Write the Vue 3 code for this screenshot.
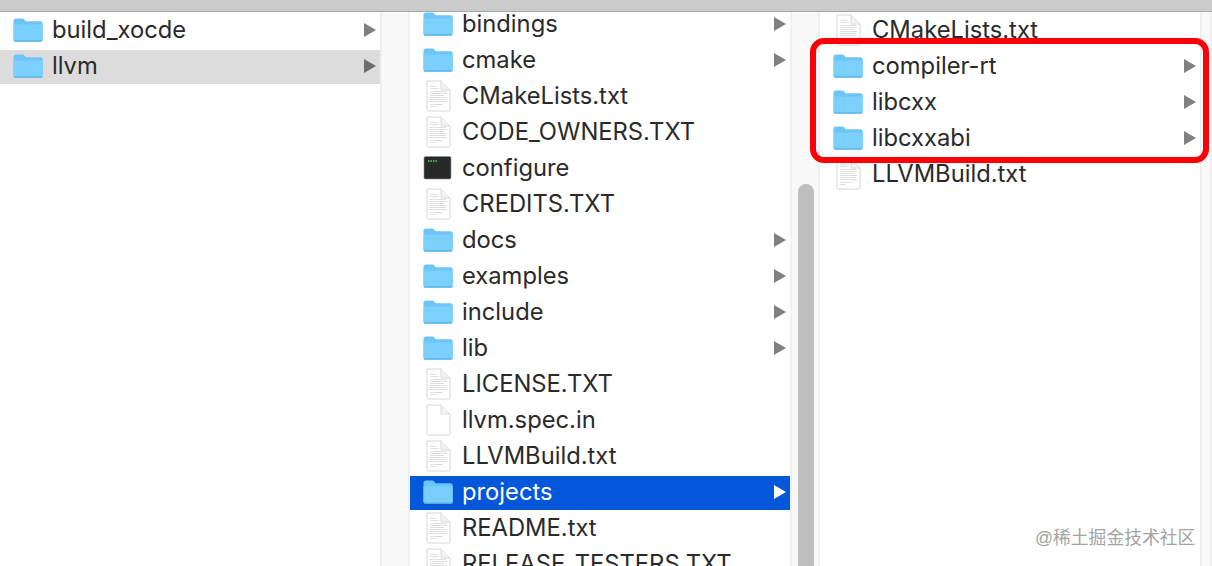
<script setup>
const columns = [
  {
    key: 'a',
    scroll: false,
    rows: [
      { name: 'build_xocde', type: 'folder' },
      { name: 'llvm', type: 'folder', state: 'inactive' },
    ],
  },
  {
    key: 'b',
    scroll: true,
    rows: [
      { name: 'bindings', type: 'folder' },
      { name: 'cmake', type: 'folder' },
      { name: 'CMakeLists.txt', type: 'doc' },
      { name: 'CODE_OWNERS.TXT', type: 'doc' },
      { name: 'configure', type: 'exec' },
      { name: 'CREDITS.TXT', type: 'doc' },
      { name: 'docs', type: 'folder' },
      { name: 'examples', type: 'folder' },
      { name: 'include', type: 'folder' },
      { name: 'lib', type: 'folder' },
      { name: 'LICENSE.TXT', type: 'doc' },
      { name: 'llvm.spec.in', type: 'blank' },
      { name: 'LLVMBuild.txt', type: 'doc' },
      { name: 'projects', type: 'folder', state: 'active' },
      { name: 'README.txt', type: 'doc' },
      { name: 'RELEASE_TESTERS.TXT', type: 'doc' },
    ],
  },
  {
    key: 'c',
    scroll: false,
    rows: [
      { name: 'CMakeLists.txt', type: 'doc' },
      { name: 'compiler-rt', type: 'folder' },
      { name: 'libcxx', type: 'folder' },
      { name: 'libcxxabi', type: 'folder' },
      { name: 'LLVMBuild.txt', type: 'doc' },
    ],
  },
]
const docLines = [
  [7, 6.5, 14], [7, 8.5, 16], [7, 11.5, 23], [7, 13.5, 24], [7, 15.5, 21],
  [7, 17.5, 24], [7, 19.5, 23], [7, 21.5, 24], [7, 24.5, 19], [7, 26.5, 13],
]
</script>

<template>
  <div class="finder">
    <div class="topbar"></div>
    <div class="panes">
      <section v-for="col in columns" :key="col.key" class="pane" :class="'pane-' + col.key">
        <ul class="list">
          <li v-for="row in col.rows" :key="row.name" class="row">
            <div class="band" :class="row.state">
              <svg v-if="row.type === 'folder'" class="icon" viewBox="0 0 30 24" width="30" height="24">
                <path d="M0.5 3 Q0.5 0.5 3 0.5 H9 Q10.5 0.5 11.5 1.8 L12.6 3.2 H27.5 Q29.7 3.2 29.7 5.4 V21.5 Q29.7 23.6 27.5 23.6 H2.7 Q0.5 23.6 0.5 21.5 Z" :fill="row.state === 'active' ? '#6cc6fb' : '#6cc4f8'" />
                <path d="M0.5 6.6 H29.7 V21.5 Q29.7 23.6 27.5 23.6 H2.7 Q0.5 23.6 0.5 21.5 Z" :fill="row.state === 'active' ? '#78cffd' : '#7bd0fd'" />
                <path d="M0.8 23 H29.4" stroke="#52a8e0" stroke-width="1" fill="none" />
              </svg>
              <svg v-else-if="row.type === 'exec'" class="icon" viewBox="0 0 30 24" width="30" height="24">
                <rect x="1" y="0.5" width="27" height="22.5" rx="1.5" fill="#262a28" stroke="#8d8d8d" stroke-width="0.6" />
                <path d="M5 5 H6.5 M7.5 5 H9 M10 5 H11.5 M12.5 5 H14" stroke="#5fcf6a" stroke-width="1.6" />
              </svg>
              <svg v-else class="icon" viewBox="0 0 30 32" width="30" height="32">
                <path d="M4 1 H18 L27 10 V29.5 Q27 31 25.5 31 H5.5 Q4 31 4 29.5 Z" fill="#fff" stroke="#d6d6d6" stroke-width="1" />
                <path d="M18 1 V10 H27" fill="#f3f3f3" stroke="#dcdcdc" stroke-width="1" />
                <template v-if="row.type === 'doc'">
                  <path v-for="l in docLines" :key="l[1]" :d="`M${l[0]} ${l[1]} H${l[2]}`" stroke="#dedede" stroke-width="1" />
                </template>
              </svg>
              <span class="name">{{ row.name }}</span>
              <span v-if="row.type === 'folder'" class="arrow"></span>
            </div>
          </li>
        </ul>
        <div v-if="col.scroll" class="gutter scrolling"><div class="thumb"></div></div>
        <div v-else class="gutter"></div>
      </section>
    </div>
    <div class="highlight"></div>
    <div class="watermark">@稀土掘金技术社区</div>
  </div>
</template>

<style>
html, body { margin: 0; background: #fff; }
</style>

<style scoped>
.finder {
  position: relative;
  width: 1212px;
  height: 566px;
  overflow: hidden;
  display: flex;
  flex-direction: column;
  background: #fff;
  font-family: Inter, "Liberation Sans", Arial, sans-serif;
  color: #2a2a2a;
}
.topbar {
  flex: none;
  height: 11px;
  background: #cbcbcb;
  border-bottom: 1px solid #a9a9a9;
}
.panes {
  flex: 1;
  min-height: 0;
  display: flex;
}
.pane {
  flex: none;
  width: 410px;
  display: flex;
  min-height: 0;
  overflow: hidden;
}
.pane-c { width: 392px; }
.list {
  list-style: none;
  margin: 0;
  padding: 0;
  width: 380px;
  flex: none;
}
.pane-b .list { margin-top: -6px; }
.row {
  height: 36px;
  display: flex;
  align-items: flex-end;
}
.band {
  width: 100%;
  height: 34px;
  display: flex;
  align-items: center;
  padding: 0 4px 2px 13px;
  box-sizing: border-box;
}
.band.inactive { background: #dcdcdc; }
.band.active { background: #0457d9; color: #fff; }
.icon { flex: none; }
.name {
  margin-left: 9px;
  font-size: 23.75px;
  line-height: 32px;
  white-space: nowrap;
}
.arrow {
  margin-left: auto;
  width: 0;
  height: 0;
  border-left: 12px solid #808080;
  border-top: 7px solid transparent;
  border-bottom: 7px solid transparent;
}
.inactive .arrow { border-left-color: #6c6c6c; }
.active .arrow { border-left-color: #fff; }
.gutter {
  flex: 1;
  background: #f9f9f9;
  border-left: 2px solid #efefef;
  border-right: 2px solid #f0f0f0;
  position: relative;
}
.thumb {
  position: absolute;
  left: 6px;
  right: 4px;
  top: 172px;
  bottom: 0;
  background: #bfbfbf;
  border-radius: 8px 8px 0 0;
}
.highlight {
  position: absolute;
  left: 810px;
  top: 38px;
  width: 399px;
  height: 125px;
  box-sizing: border-box;
  border: 6px solid #fb0007;
  border-radius: 14px;
  pointer-events: none;
}
.watermark {
  position: absolute;
  left: 1035px;
  top: 527px;
  font-family: "Liberation Sans", "Noto Sans CJK SC", sans-serif;
  font-size: 17.8px;
  line-height: 22px;
  color: #a3a3a3;
  white-space: nowrap;
}
</style>
